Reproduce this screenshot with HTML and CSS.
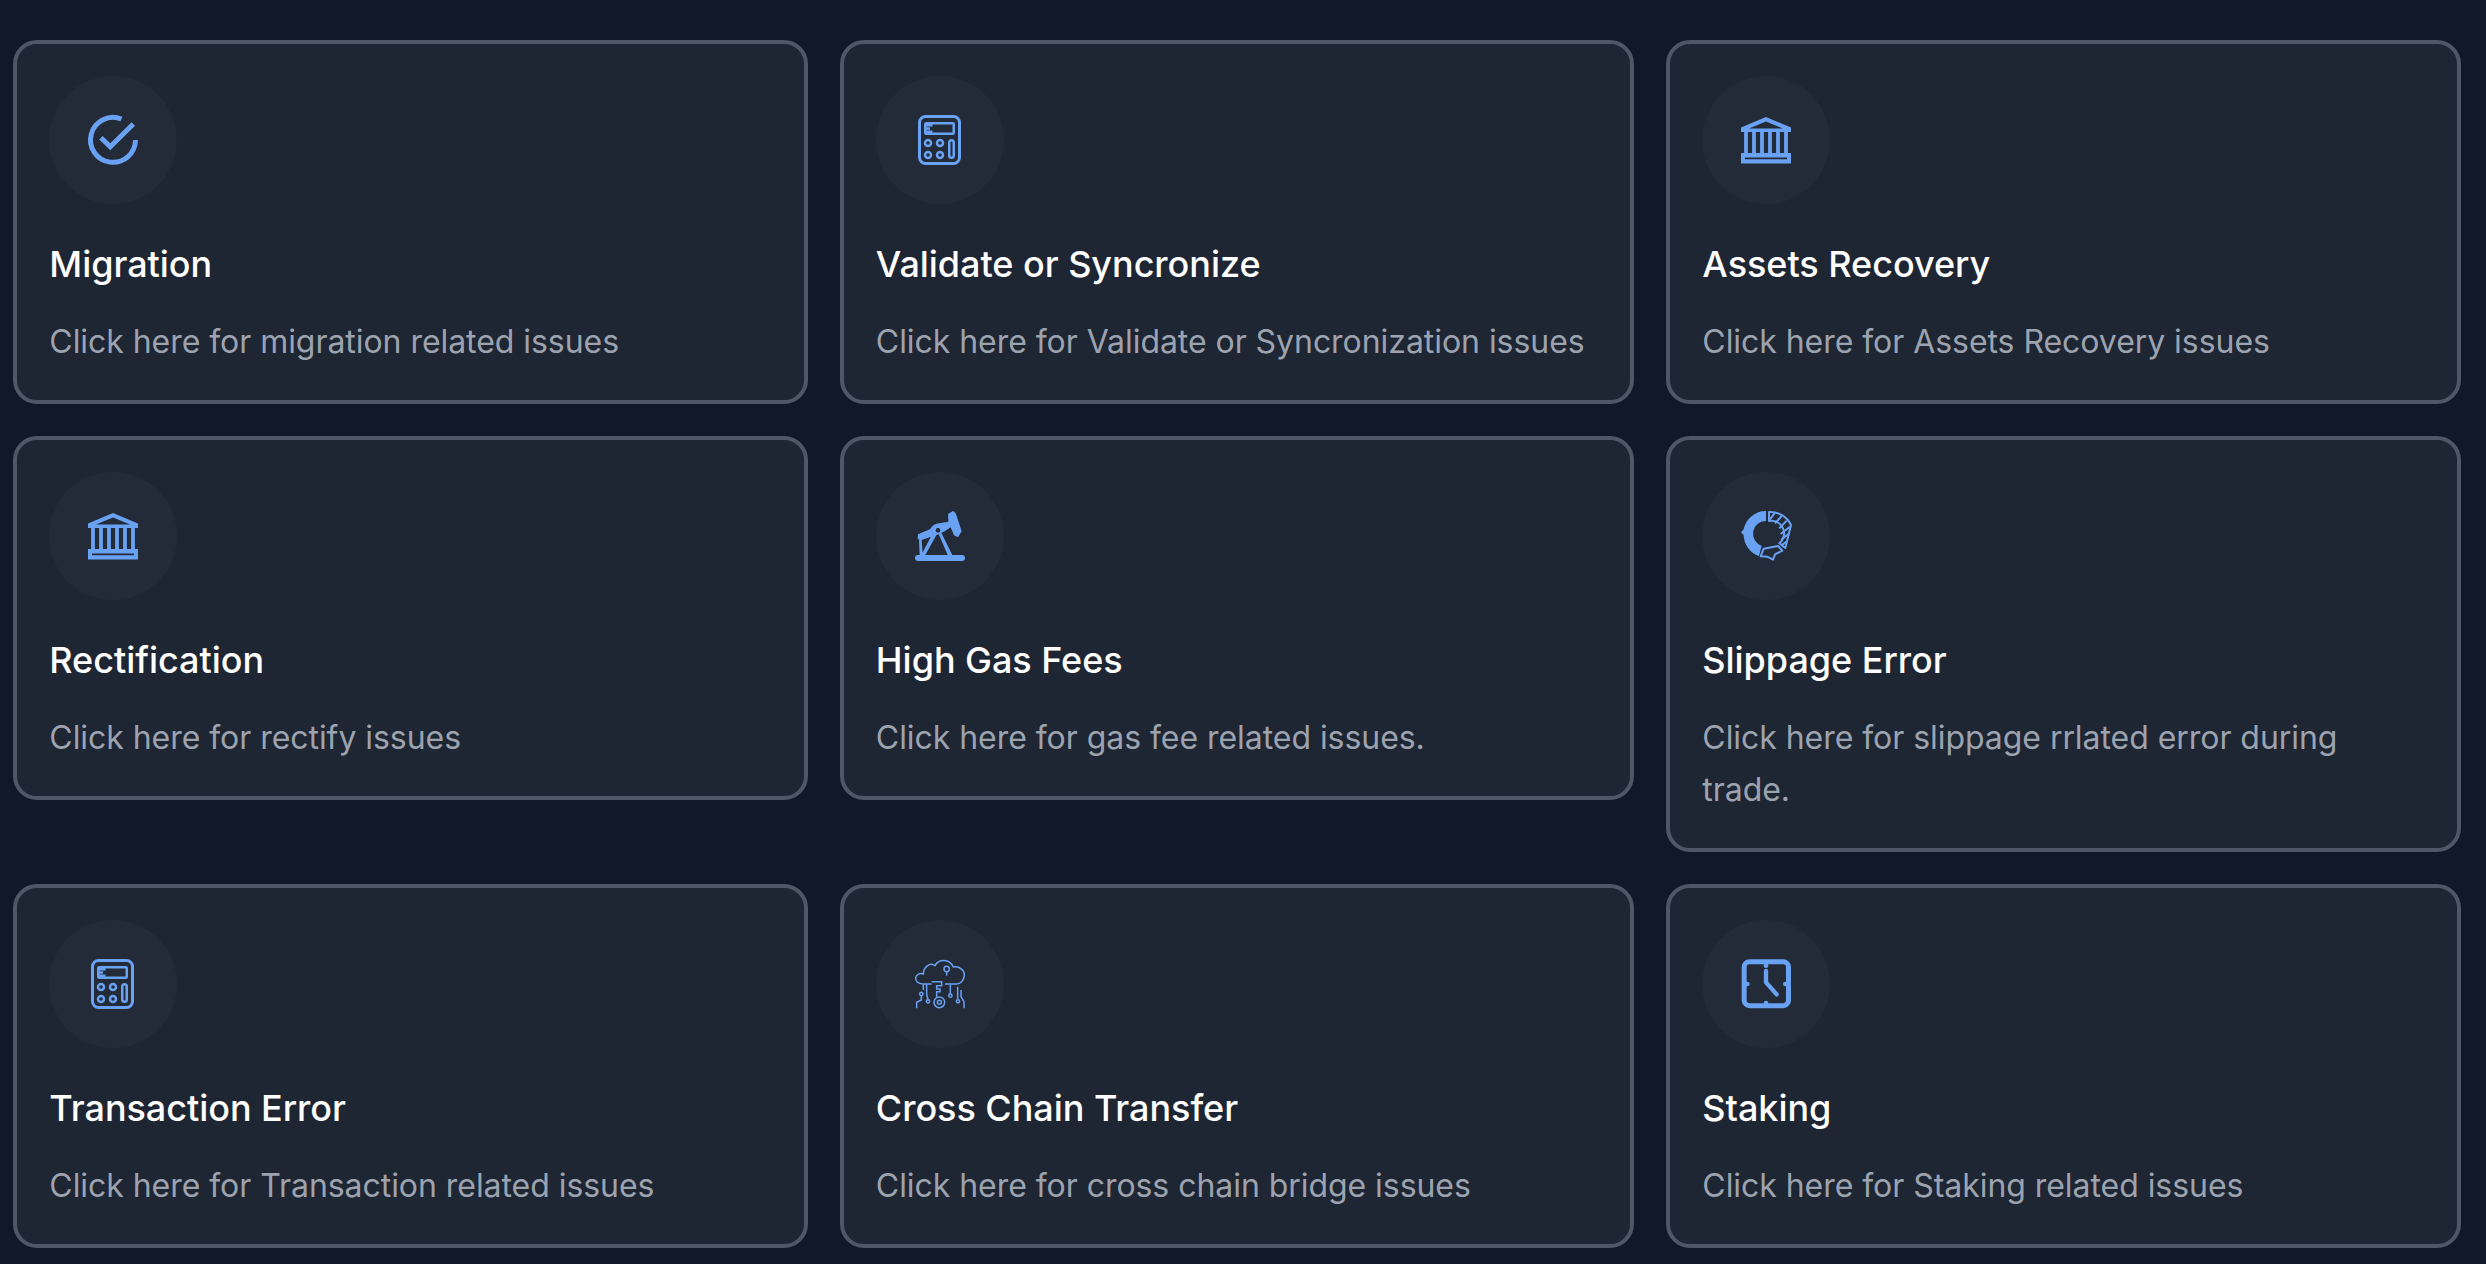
FILE: index.html
```html
<!DOCTYPE html>
<html lang="en">
<head>
<meta charset="utf-8">
<title>Support</title>
<link rel="stylesheet" href="styles.css">
</head>
<body>
<svg class="defs" aria-hidden="true">
  <symbol id="i-calc" viewBox="0 0 64 64">
    <rect class="ol" x="11.500" y="8.500" width="40" height="47" rx="6"/>
    <rect class="ol2" x="17.250" y="15.250" width="28.500" height="10.500" rx="1"/>
    <path class="ol2" d="M17 17.200h7.500M17 20.500h5M17 23.800h7.500"/>
    <circle class="ol2" cx="20" cy="35" r="3"/><circle class="ol2" cx="32" cy="35" r="3"/>
    <circle class="ol2" cx="20" cy="47" r="3"/><circle class="ol2" cx="32" cy="47" r="3"/>
    <rect class="ol2" x="41.250" y="32.250" width="4.500" height="17.500" rx="2.250"/>
  </symbol>
  <symbol id="i-bank" viewBox="0 0 64 64">
    <path class="fill" fill-rule="evenodd" d="M32 9 57 19.500V24H7v-4.500zM32 13.500 15 20.500h34z"/>
    <path class="fill" d="M10.100 24h3.800v21h-3.800zM18.100 24h3.800v21h-3.800zM26.100 24h3.800v21h-3.800zM34.100 24h3.800v21h-3.800zM42.100 24h3.800v21h-3.800zM50.100 24h3.800v21h-3.800z"/>
    <path class="fill" fill-rule="evenodd" d="M7 45h50v10.500H7zM11 49.500v1.800h42v-1.800z"/>
  </symbol>
</svg>

<main class="grid">
  <article class="card">
    <div class="badge"><svg class="icon" viewBox="0 0 64 64"><path class="ol5" d="M40.500 11A22.500 22.500 0 1 0 54.500 32"/><path class="ol5" d="M20 29.700 29.300 38.700 52.300 16"/></svg></div>
    <h2 class="title">Migration</h2>
    <p class="desc">Click here for migration related issues</p>
  </article>
  <article class="card">
    <div class="badge"><svg class="icon"><use href="#i-calc"/></svg></div>
    <h2 class="title">Validate or Syncronize</h2>
    <p class="desc">Click here for Validate or Syncronization issues</p>
  </article>
  <article class="card">
    <div class="badge"><svg class="icon"><use href="#i-bank"/></svg></div>
    <h2 class="title">Assets Recovery</h2>
    <p class="desc">Click here for Assets Recovery issues</p>
  </article>
  <article class="card">
    <div class="badge"><svg class="icon"><use href="#i-bank"/></svg></div>
    <h2 class="title">Rectification</h2>
    <p class="desc">Click here for rectify issues</p>
  </article>
  <article class="card">
    <div class="badge"><svg class="icon" viewBox="0 0 64 64"><g transform="translate(-28 -14) scale(.33333)">
      <path class="fill" fill-rule="evenodd" d="M114 133 150 118Q160 100 178 100L205 95 204 72 219 63Q226 64 230 78L245 124 234 142 222 136 212 112 194 124 176 133 122 151 113 147zM174 114a7 7 0 1 0 .01 0z"/>
      <path class="fill" d="M117 150h8l3 45h-9zM158 130h14l-36 65h-12zM176 132l8-4 33 67h-14z"/>
      <rect class="fill" x="105" y="195" width="150" height="18" rx="9"/>
    </g></svg></div>
    <h2 class="title">High Gas Fees</h2>
    <p class="desc">Click here for gas fee related issues.</p>
  </article>
  <article class="card">
    <div class="badge"><svg class="icon" viewBox="0 0 64 64"><g transform="translate(-14 -14) scale(.33333)">
      <path class="fill" d="M138 63A68 68 0 0 0 71 118L63 127 71 135A68 68 0 0 0 117 198L125 167A38 38 0 0 1 138 93z"/>
      <path class="thin" d="M147 66A68 68 0 0 1 213 105L196 174 178 160A38 38 0 0 0 147 93z"/>
      <path class="thin" d="M165 68 150 88M185 78 165 100M200 92 178 115M210 110 182 132M205 132 183 150M200 155 186 165"/>
      <path class="thin" d="M122 199 131 176 174 168 187 182 165 193 159 209 142 200z"/>
    </g></svg></div>
    <h2 class="title">Slippage Error</h2>
    <p class="desc">Click here for slippage rrlated error during trade.</p>
  </article>
  <article class="card">
    <div class="badge"><svg class="icon"><use href="#i-calc"/></svg></div>
    <h2 class="title">Transaction Error</h2>
    <p class="desc">Click here for Transaction related issues</p>
  </article>
  <article class="card">
    <div class="badge"><svg class="icon" viewBox="0 0 64 64"><g class="cloud" transform="translate(-18 -7) scale(.33333)">
      <path d="M125 117H98C84 117 76 108 77 98 79 88 90 83 100 87 100 68 120 50 135 62 145 42 178 40 190 66 208 62 224 76 223 92 222 106 212 117 200 117H165"/>
      <circle cx="170" cy="72" r="8"/><path d="M170 80v12"/>
      <path d="M125 110H155V122H140V132H150V140H140V156"/>
      <circle cx="148" cy="172" r="16"/><circle cx="148" cy="172" r="6"/>
      <path d="M100 118V135"/><circle cx="94" cy="147" r="5"/><path d="M94 152V165L80 172V190"/>
      <path d="M110 118V148L114 163"/><circle cx="114" cy="169" r="5"/>
      <path d="M181 118V147"/><circle cx="181" cy="152" r="5"/>
      <path d="M203 125V163"/><circle cx="204" cy="169" r="5"/>
      <path d="M213 135V155L222 170V190"/>
    </g></svg></div>
    <h2 class="title">Cross Chain Transfer</h2>
    <p class="desc">Click here for cross chain bridge issues</p>
  </article>
  <article class="card">
    <div class="badge"><svg class="icon" viewBox="0 0 64 64"><g transform="translate(-14 -7) scale(.33333)">
      <rect class="clock" x="72.500" y="50" width="133" height="132" rx="16"/>
      <path class="hand" d="M138 78V112L170 148"/>
      <circle class="fill" cx="138" cy="62" r="7"/><circle class="fill" cx="82" cy="117" r="7"/><circle class="fill" cx="196" cy="117" r="7"/><circle class="fill" cx="138" cy="174" r="7"/>
    </g></svg></div>
    <h2 class="title">Staking</h2>
    <p class="desc">Click here for Staking related issues</p>
  </article>
</main>
</body>
</html>
```

FILE: styles.css
```css
* { box-sizing: border-box; }

html, body {
  margin: 0;
  background: #111827;
}

body {
  height: 1264px;
  overflow: hidden;
  font-family: Inter, "Liberation Sans", sans-serif;
}

.defs {
  display: none;
}

.grid {
  display: grid;
  grid-template-columns: repeat(3, 794.5px);
  column-gap: 32px;
  row-gap: 32px;
  align-items: start;
  padding: 40px 0 0 13.33px;
}

.card {
  background: #1e2533;
  border: 4px solid #4f5766;
  border-radius: 24px;
  padding: 32px;
}

.badge {
  width: 128px;
  height: 128px;
  border-radius: 50%;
  background: #242b38;
  display: flex;
  align-items: center;
  justify-content: center;
}

.icon {
  width: 64px;
  height: 64px;
  display: block;
}

.title {
  margin: 32px 0 0;
  font-size: 36px;
  line-height: 56px;
  font-weight: 500;
  letter-spacing: -0.04px;
  color: #ffffff;
}

.desc {
  margin: 24px 0 0;
  font-size: 32px;
  line-height: 52px;
  font-weight: 400;
  letter-spacing: -0.05px;
  color: #9ca3af;
}

.fill { fill: #69a1f3; stroke: none; }
.ol { fill: none; stroke: #69a1f3; stroke-width: 3; }
.ol2 { fill: none; stroke: #69a1f3; stroke-width: 2.5; }
.ol5 { fill: none; stroke: #69a1f3; stroke-width: 5; }
.thin { fill: none; stroke: #69a1f3; stroke-width: 6; stroke-linejoin: round; }
.cloud { fill: none; stroke: #69a1f3; stroke-width: 4.5; }
.clock { fill: none; stroke: #69a1f3; stroke-width: 15; }
.hand { fill: none; stroke: #69a1f3; stroke-width: 13; stroke-linecap: round; stroke-linejoin: round; }
```
